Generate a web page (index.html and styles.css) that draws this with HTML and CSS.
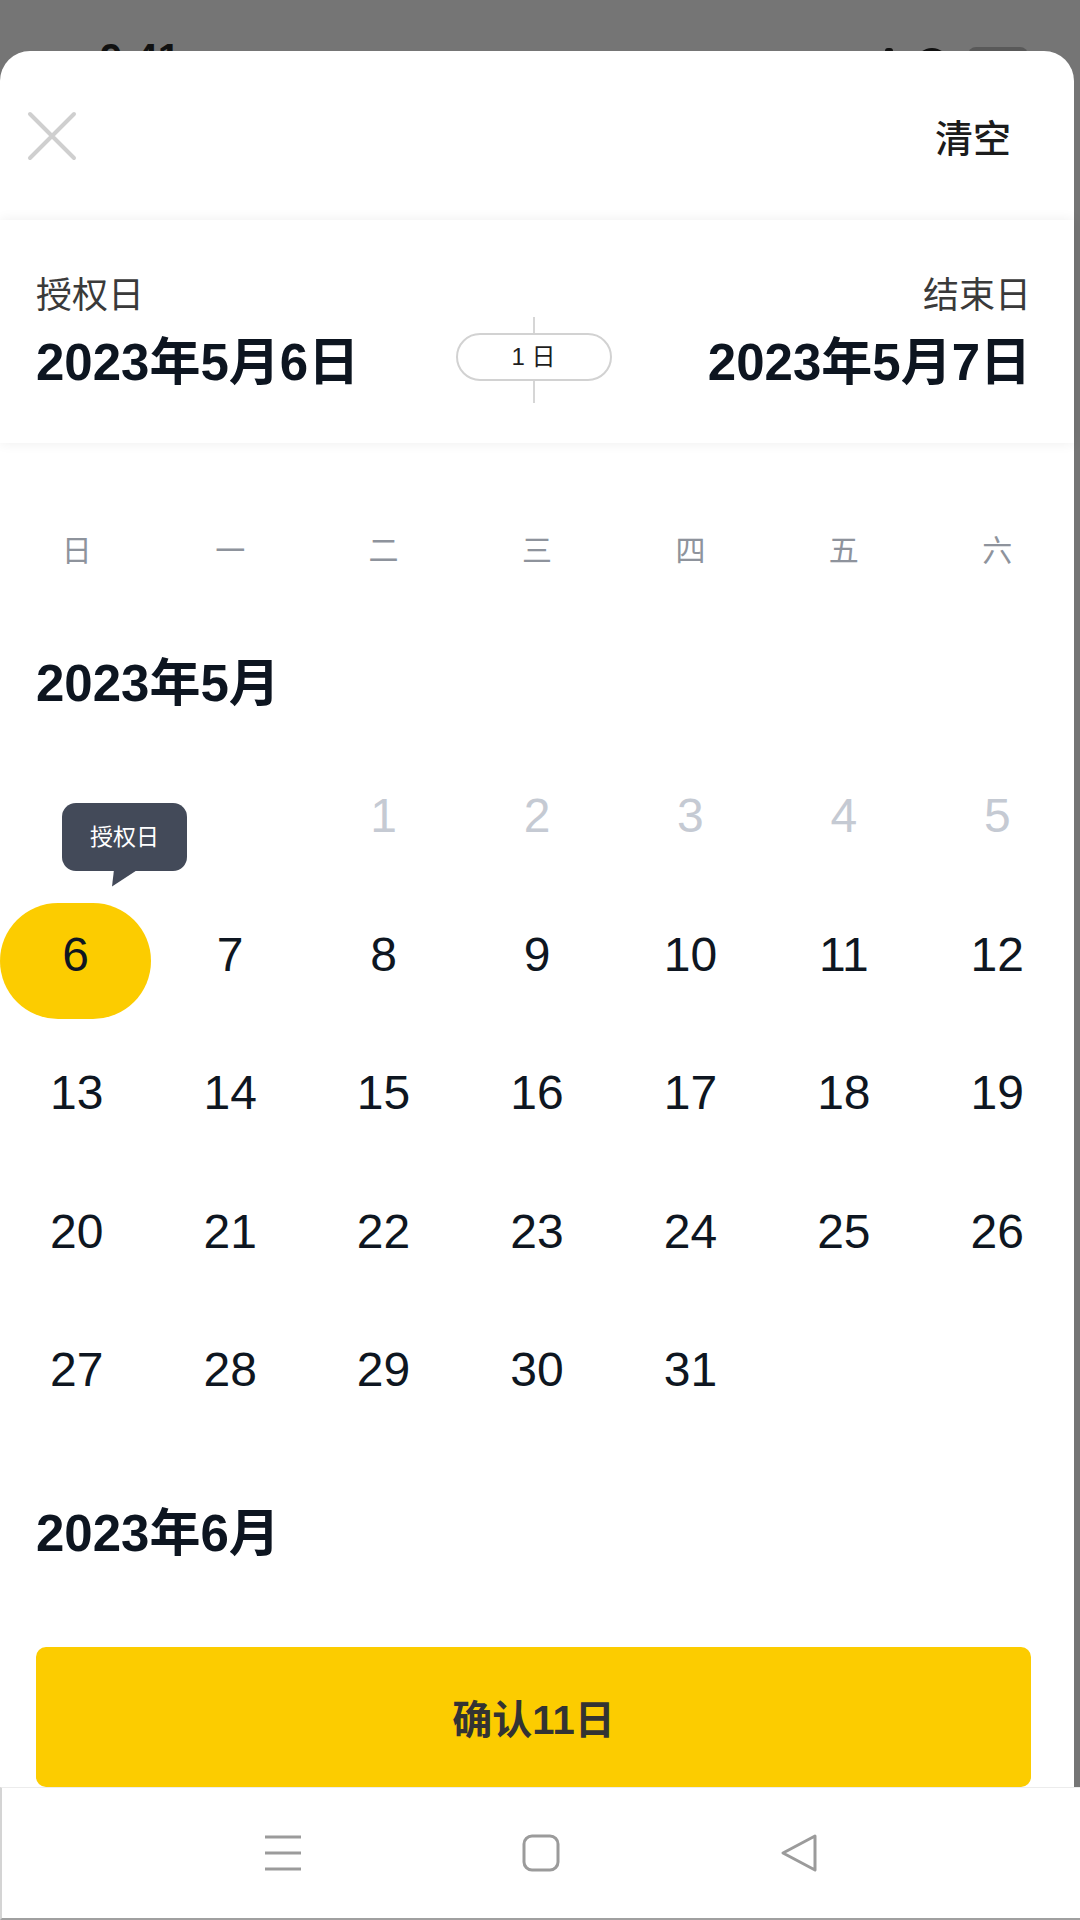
FILE: index.html
```html
<!DOCTYPE html>
<html lang="zh-CN">
<head>
    <meta charset="UTF-8">
    <meta name="viewport" content="width=device-width, initial-scale=1.0">
    <title>选择日期</title>
    <link rel="stylesheet" href="styles.css">
</head>
<body>
    <!-- 状态栏（被弹层盖住） -->
    <div class="statusbar">
        <span class="time">9:41</span>
        <svg width="145" height="30" viewBox="0 0 145 30">
            <rect x="0" y="1" width="8" height="28" rx="3" fill="#111"/>
            <path d="M32 14 A15 13 0 0 1 62 14 L47 29 Z" fill="#111"/>
            <rect x="83" y="0" width="60" height="28" rx="8" fill="#595959"/>
        </svg>
    </div>

    <div class="sheet">
        <div class="topbar">
            <svg class="close" viewBox="0 0 50 50">
                <path d="M3 3 L47 47 M47 3 L3 47" stroke="#cfcfcf" stroke-width="4" stroke-linecap="round" fill="none"/>
            </svg>
            <span class="clear">清空</span>
        </div>

        <div class="summary">
            <div class="side">
                <div class="label">授权日</div>
                <div class="date">2023年5月6日</div>
            </div>
            <div class="span">
                <div class="tick"></div>
                <div class="pill">1 日</div>
                <div class="tick tick-low"></div>
            </div>
            <div class="side side-end">
                <div class="label">结束日</div>
                <div class="date">2023年5月7日</div>
            </div>
        </div>

        <div class="scroller">
            <div class="weekdays">
                <span>日</span><span>一</span><span>二</span><span>三</span><span>四</span><span>五</span><span>六</span>
            </div>

            <div class="month">
                <div class="month-title">2023年5月</div>
                <div class="days">
                    <div class="day"></div>
                    <div class="day"></div>
                    <div class="day muted">1</div>
                    <div class="day muted">2</div>
                    <div class="day muted">3</div>
                    <div class="day muted">4</div>
                    <div class="day muted">5</div>
                    <div class="day start">
                        <div class="tip">授权日</div>
                        <span class="mark">6</span>
                    </div>
                    <div class="day">7</div>
                    <div class="day">8</div>
                    <div class="day">9</div>
                    <div class="day">10</div>
                    <div class="day">11</div>
                    <div class="day">12</div>
                    <div class="day">13</div>
                    <div class="day">14</div>
                    <div class="day">15</div>
                    <div class="day">16</div>
                    <div class="day">17</div>
                    <div class="day">18</div>
                    <div class="day">19</div>
                    <div class="day">20</div>
                    <div class="day">21</div>
                    <div class="day">22</div>
                    <div class="day">23</div>
                    <div class="day">24</div>
                    <div class="day">25</div>
                    <div class="day">26</div>
                    <div class="day">27</div>
                    <div class="day">28</div>
                    <div class="day">29</div>
                    <div class="day">30</div>
                    <div class="day">31</div>
                </div>
            </div>

            <div class="month">
                <div class="month-title">2023年6月</div>
            </div>
        </div>

        <div class="footer">
            <button class="confirm">确认11日</button>
        </div>
    </div>

    <!-- 系统导航栏 -->
    <div class="navbar">
        <div class="nav-item">
            <svg width="40" height="40" viewBox="0 0 40 40">
                <path d="M2 4 H38 M2 20 H38 M2 36 H38" stroke="#9b9b9b" stroke-width="3" fill="none"/>
            </svg>
        </div>
        <div class="nav-item">
            <svg width="40" height="40" viewBox="0 0 40 40">
                <rect x="3" y="3" width="34" height="34" rx="8" stroke="#9b9b9b" stroke-width="3" fill="none"/>
            </svg>
        </div>
        <div class="nav-item">
            <svg width="40" height="40" viewBox="0 0 40 40">
                <path d="M36 3 L4 20 L36 37 Z" stroke="#9b9b9b" stroke-width="3" stroke-linejoin="round" fill="none"/>
            </svg>
        </div>
    </div>
</body>
</html>
```

FILE: styles.css
```css
* {
    box-sizing: border-box;
}
body {
    margin: 0;
    width: 1080px;
    height: 1920px;
    overflow: hidden;
    background-color: #757575;
    font-family: "Liberation Sans", "Noto Sans CJK SC", sans-serif;
    color: #0e1621;
}

/* 状态栏 */
.statusbar {
    height: 51px;
    display: flex;
    justify-content: space-between;
    align-items: flex-start;
    padding: 38px 50px 0 100px;
}
.statusbar .time {
    font-size: 40px;
    line-height: 40px;
    font-weight: 700;
    color: #111;
}
.statusbar svg {
    margin-top: 9px;
}

/* 弹层 */
.sheet {
    position: relative;
    width: 1074px;
    height: 1736px;
    background-color: #fff;
    border-radius: 30px 30px 0 0;
    display: flex;
    flex-direction: column;
}
.topbar {
    height: 169px;
    flex-shrink: 0;
    display: flex;
    align-items: center;
    justify-content: space-between;
    padding: 0 63px 0 27px;
}
.close {
    width: 50px;
    height: 50px;
    display: block;
}
.clear {
    font-size: 38px;
    font-weight: 500;
    color: #1c1c1c;
}

/* 起止日期 */
.summary {
    position: relative;
    z-index: 2;
    height: 223px;
    flex-shrink: 0;
    display: flex;
    justify-content: space-between;
    align-items: flex-start;
    padding: 54px 43px 0 36px;
    background-color: #fff;
    box-shadow: 0 0 12px rgba(0, 0, 0, 0.07);
}
.side .label {
    font-size: 36px;
    line-height: 44px;
    color: #3a3a3a;
}
.side .date {
    margin-top: 13px;
    font-size: 51px;
    line-height: 64px;
    font-weight: 700;
    color: #0d1520;
}
.side-end {
    text-align: right;
}
.span {
    margin-top: 43px;
    display: flex;
    flex-direction: column;
    align-items: center;
}
.tick {
    width: 2px;
    height: 16px;
    background-color: #d6d6d6;
}
.tick-low {
    height: 22px;
}
.pill {
    width: 156px;
    height: 48px;
    border: 2px solid #d2d2d2;
    border-radius: 24px;
    font-size: 24px;
    line-height: 44px;
    text-align: center;
    color: #1e1e1e;
}

/* 日历 */
.scroller {
    flex: 1;
    overflow: hidden;
}
.weekdays {
    display: grid;
    grid-template-columns: repeat(7, 1fr);
    padding-top: 88px;
    margin-bottom: 19px;
    font-size: 30px;
    line-height: 40px;
    color: #8e939c;
    text-align: center;
}
.month {
    padding-top: 64px;
}
.month-title {
    padding-left: 36px;
    margin-bottom: 33px;
    font-size: 51px;
    line-height: 60px;
    font-weight: 700;
    color: #0d1520;
}
.days {
    display: grid;
    grid-template-columns: repeat(7, 1fr);
    grid-auto-rows: 138.5px;
}
.day {
    position: relative;
    display: flex;
    align-items: center;
    justify-content: center;
    font-size: 48px;
    line-height: 1;
}
.day.muted {
    color: #c5cad3;
}
.day.start {
    justify-content: flex-start;
}
.mark {
    width: 151px;
    height: 116px;
    margin-top: 13px;
    padding-bottom: 12px;
    border-radius: 58px;
    background-color: #fccc00;
    display: flex;
    align-items: center;
    justify-content: center;
}
.tip {
    position: absolute;
    z-index: 3;
    left: 62px;
    bottom: calc(100% + 15px);
    width: 125px;
    height: 68px;
    border-radius: 14px;
    background-color: #434a59;
    color: #fff;
    font-size: 23px;
    line-height: 68px;
    text-align: center;
}
.tip::after {
    content: "";
    position: absolute;
    left: 50px;
    top: 67px;
    width: 26px;
    height: 17px;
    background-color: #434a59;
    clip-path: polygon(2px 0, 26px 0, 0 17px);
}

/* 底部按钮 */
.footer {
    flex-shrink: 0;
    padding: 27px 43px 0 36px;
    background-color: #fff;
}
.confirm {
    display: block;
    width: 100%;
    height: 140px;
    border: none;
    border-radius: 10px;
    background-color: #fccc00;
    font-family: inherit;
    font-size: 40px;
    font-weight: 700;
    color: #333;
}

/* 导航栏 */
.navbar {
    height: 133px;
    display: flex;
    justify-content: center;
    align-items: center;
    background-color: #fff;
    border-top: 1px solid #ececec;
    border-left: 2px solid #d4d4d4;
    border-bottom: 2px solid #a0a0a0;
}
.nav-item {
    width: 258px;
    display: flex;
    justify-content: center;
}
.nav-item svg {
    display: block;
}
```
